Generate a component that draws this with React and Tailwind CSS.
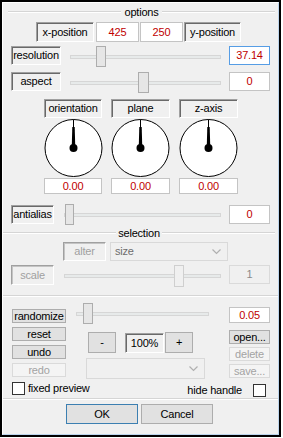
import React from "react";

function Sunken({ className = "", children, disabled }) {
  return (
    <div
      className={`flex items-center justify-center border border-t-[#a0a0a0] border-l-[#a0a0a0] border-r-white border-b-white ${
        disabled ? "shadow-[inset_1px_1px_0_#c4c4c4] text-[#a0a0a0]" : "shadow-[inset_1px_1px_0_#696969] text-black"
      } ${className}`}
    >
      {children}
    </div>
  );
}

function Val({ className = "", children, focus, disabled }) {
  return (
    <div
      className={`flex items-center justify-center border ${
        focus ? "border-[#569de5]" : disabled ? "border-[#dadada]" : "border-[#c4c4c4]"
      } ${disabled ? "bg-[#f0f0f0] text-[#8a8a8a]" : "bg-white text-[#c00000]"} ${className}`}
    >
      {children}
    </div>
  );
}

function Btn({ className = "", children, disabled, primary }) {
  return (
    <div
      className={`flex items-center justify-center border ${
        disabled
          ? "bg-[#f4f4f4] border-[#dadada] text-[#a3a3a3]"
          : primary
          ? "bg-[#e1e1e1] border-[#3c7fb1] text-black"
          : "bg-[#e1e1e1] border-[#adadad] text-black"
      } ${className}`}
    >
      {children}
    </div>
  );
}

function Slider({ className = "", trackClass = "", thumbClass = "", disabled }) {
  return (
    <div className={`relative ${className}`}>
      <div className={`absolute top-1/2 -translate-y-1/2 h-[4px] bg-[#e7eaea] border border-[#d6d6d6] ${trackClass}`} />
      <div
        className={`absolute top-0 border ${
          disabled ? "bg-[#f0f0f0] border-[#cfcfcf]" : "bg-[#e6e6e6] border-[#adadad]"
        } ${thumbClass}`}
      />
    </div>
  );
}

function Chevron({ className = "" }) {
  return (
    <svg className={className} width="9" height="6" viewBox="0 0 9 6">
      <polyline points="0.5,0.5 4.5,4.5 8.5,0.5" fill="none" stroke="#b0b0b0" strokeWidth="1.2" />
    </svg>
  );
}

function Dial() {
  return (
    <svg width="59" height="60" viewBox="0 0 59 60">
      <circle cx="29.5" cy="30" r="28.5" fill="white" stroke="black" strokeWidth="1" />
      <line x1="29.5" y1="1.5" x2="29.5" y2="10" stroke="black" strokeWidth="1" />
      <path d="M28.3 9 L30.7 9 L31.2 27 L27.8 27 Z" fill="black" />
      <circle cx="29.5" cy="30" r="4" fill="black" />
    </svg>
  );
}

function Line({ className = "" }) {
  return <div className={`h-[2px] border-t border-[#d5d5d5] border-b border-b-white ${className}`} />;
}

function Check({ className = "" }) {
  return <div className={`w-[13px] h-[13px] bg-white border border-[#333333] ${className}`} />;
}

export default function App() {
  return (
    <div className="w-[283px] h-[438px] bg-white font-['Liberation_Sans',Arial,sans-serif] text-[11px] leading-none tracking-[-0.2px]">
      <div className="w-[281px] h-[437px] border-2 border-black">
        <div className="h-full border border-t-white border-l-white border-r-[#bcd4ec] border-b-[#bcd4ec] bg-[#f0f0f0] flex flex-col">
          {/* options header */}
          <div className="h-[18px] flex items-center pl-[5px] pr-[3px]">
            <Line className="flex-1" />
            <span className="px-[3px] text-black">options</span>
            <Line className="flex-1" />
          </div>

          {/* x / y position */}
          <div className="flex h-[20px] mt-[1px]">
            <Sunken className="ml-[33px] w-[58px] h-[20px]">x-position</Sunken>
            <Val className="ml-[2px] w-[43px] h-[20px]">425</Val>
            <Val className="ml-[1px] w-[43px] h-[20px]">250</Val>
            <Sunken className="ml-[1px] w-[57px] h-[20px]">y-position</Sunken>
          </div>

          {/* resolution */}
          <div className="flex h-[21px] mt-[4px] items-start">
            <Sunken className="ml-[8px] w-[50px] h-[19px]">resolution</Sunken>
            <Slider className="w-[168px] h-[21px]" trackClass="left-[9px] w-[151px]" thumbClass="left-[35px] w-[10px] h-[21px]" />
            <Val focus className="w-[41px] h-[19px]">37.14</Val>
          </div>

          {/* aspect */}
          <div className="flex h-[21px] mt-[5px] items-start">
            <Sunken className="ml-[8px] w-[50px] h-[19px]">aspect</Sunken>
            <Slider className="w-[168px] h-[21px]" trackClass="left-[9px] w-[151px]" thumbClass="left-[77px] w-[11px] h-[21px]" />
            <Val className="w-[41px] h-[19px]">0</Val>
          </div>

          {/* dials */}
          <div className="flex mt-[6px]">
            <div className="ml-[41px] w-[58px] flex flex-col items-center">
              <Sunken className="w-[58px] h-[19px]">orientation</Sunken>
              <Dial />
              <Val className="w-[58px] h-[16px]">0.00</Val>
            </div>
            <div className="ml-[9px] w-[59px] flex flex-col items-center">
              <Sunken className="w-[59px] h-[19px]">plane</Sunken>
              <Dial />
              <Val className="w-[59px] h-[16px]">0.00</Val>
            </div>
            <div className="ml-[9px] w-[59px] flex flex-col items-center">
              <Sunken className="w-[59px] h-[19px]">z-axis</Sunken>
              <Dial />
              <Val className="w-[59px] h-[16px]">0.00</Val>
            </div>
          </div>

          {/* antialias */}
          <div className="flex h-[22px] mt-[10px] items-start">
            <Sunken className="ml-[8px] mt-[1px] w-[43px] h-[19px]">antialias</Sunken>
            <Slider className="w-[175px] h-[22px]" trackClass="left-[10px] w-[157px]" thumbClass="left-[11px] w-[9px] h-[21px]" />
            <Val className="mt-[1px] w-[41px] h-[19px]">0</Val>
          </div>

          {/* selection header */}
          <div className="h-[14px] flex items-center pr-[3px]">
            <Line className="flex-1" />
            <span className="px-[2px] text-black">selection</span>
            <Line className="flex-1" />
          </div>

          {/* alter / size */}
          <div className="flex h-[19px] mt-[2px]">
            <Sunken disabled className="ml-[60px] w-[43px] h-[19px]">alter</Sunken>
            <div className="ml-[4px] w-[118px] h-[19px] border border-[#d9d9d9] bg-[#f0f0f0] flex items-center justify-between pl-[4px] pr-[6px] text-[#6d6d6d]">
              <span>size</span>
              <Chevron />
            </div>
          </div>

          {/* scale */}
          <div className="flex h-[22px] mt-[4px] items-start">
            <Sunken disabled className="ml-[8px] w-[43px] h-[20px]">scale</Sunken>
            <Slider disabled className="w-[175px] h-[22px]" trackClass="left-[10px] w-[157px]" thumbClass="left-[120px] w-[10px] h-[22px]" />
            <Val disabled className="w-[41px] h-[19px]">1</Val>
          </div>

          <Line className="mt-[8px]" />

          {/* randomize block */}
          <div className="flex h-[82px]">
            <div className="ml-[9px] w-[54px] flex flex-col pt-[12px] gap-[4px]">
              <Btn className="h-[14px]">randomize</Btn>
              <Btn className="h-[14px]">reset</Btn>
              <Btn className="h-[14px]">undo</Btn>
              <Btn disabled className="h-[14px]">redo</Btn>
            </div>
            <div className="w-[163px] flex flex-col">
              <Slider className="mt-[6px] w-[163px] h-[21px]" trackClass="left-[10px] w-[133px]" thumbClass="left-[17px] w-[10px] h-[21px]" />
              <div className="flex mt-[8px] h-[21px]">
                <Btn className="ml-[22px] w-[28px] h-[21px]">-</Btn>
                <Sunken className="ml-[9px] mt-[1px] w-[39px] h-[20px]">100%</Sunken>
                <Btn className="ml-[1px] w-[28px] h-[21px]">+</Btn>
              </div>
              <div className="mt-[5px] ml-[20px] w-[119px] h-[21px] border border-[#d9d9d9] bg-[#f0f0f0] flex items-center justify-end pr-[6px]">
                <Chevron />
              </div>
            </div>
            <div className="w-[41px] flex flex-col">
              <Val className="mt-[10px] w-[41px] h-[16px]">0.05</Val>
              <Btn className="mt-[7px] h-[14px]">open...</Btn>
              <Btn disabled className="mt-[3px] h-[14px]">delete</Btn>
              <Btn disabled className="mt-[3px] h-[14px]">save...</Btn>
            </div>
          </div>

          {/* checkboxes */}
          <div className="flex h-[18px] items-start justify-between">
            <div className="flex items-center ml-[9px] mt-[3px]">
              <Check />
              <span className="ml-[3px] text-black">fixed preview</span>
            </div>
            <div className="flex items-center mr-[12px] mt-[5px]">
              <span className="mr-[11px] text-black">hide handle</span>
              <Check />
            </div>
          </div>

          <Line className="mt-[1px]" />

          {/* OK / Cancel */}
          <div className="flex mt-[4px] h-[20px]">
            <Btn primary className="ml-[63px] w-[72px] h-[20px]">OK</Btn>
            <Btn className="ml-[3px] w-[72px] h-[20px]">Cancel</Btn>
          </div>
        </div>
      </div>
    </div>
  );
}
